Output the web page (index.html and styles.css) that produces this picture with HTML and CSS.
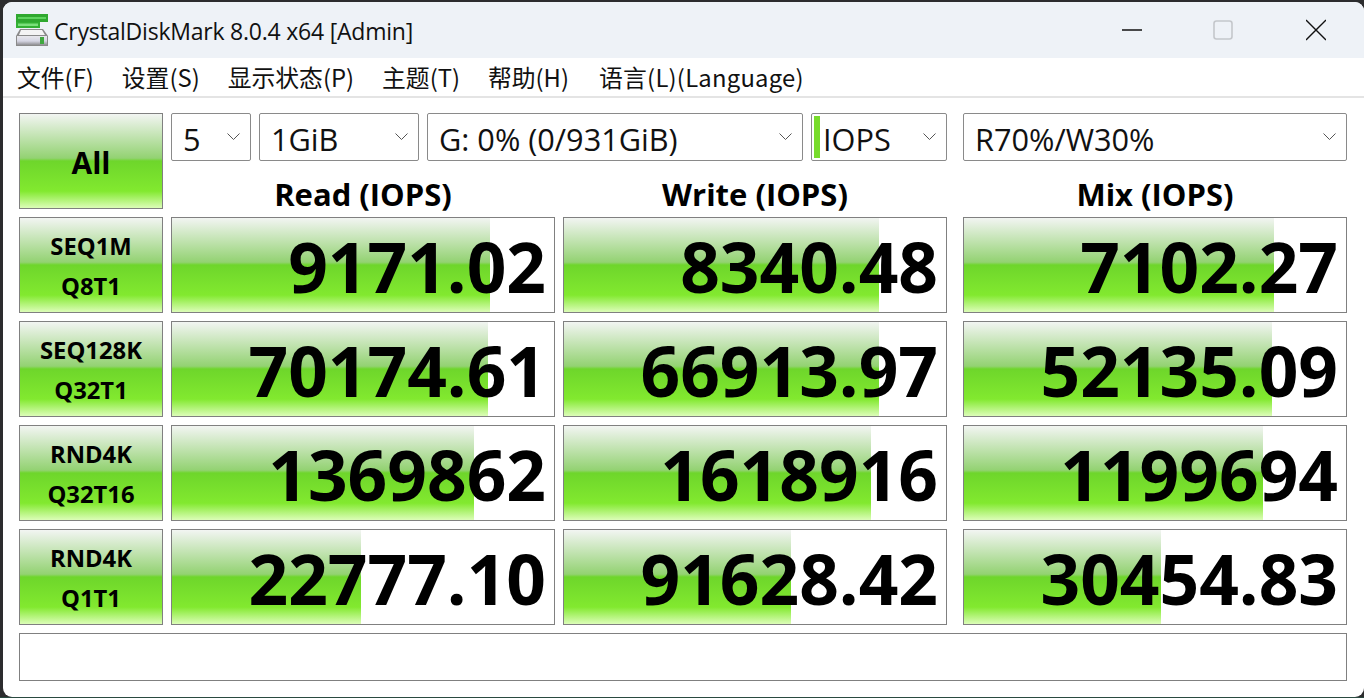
FILE: index.html
```html
<!DOCTYPE html>
<html lang="zh">
<head>
<meta charset="utf-8">
<title>CrystalDiskMark 8.0.4 x64 [Admin]</title>
<link rel="stylesheet" href="styles.css">
</head>
<body>
<div class="window">
  <header class="titlebar">
    <svg class="app-icon" viewBox="0 0 32 32" width="32" height="32" aria-hidden="true">
      <defs>
        <linearGradient id="drive" x1="0" y1="0" x2="0" y2="1"><stop offset="0" stop-color="#e8e8ec"/><stop offset="0.55" stop-color="#d6d6e4"/><stop offset="1" stop-color="#8f8f92"/></linearGradient>
      </defs>
      <rect x="0" y="0" width="32" height="8" fill="#2fa82f"/>
      <rect x="2" y="3" width="28" height="2" fill="#5fd45f"/>
      <rect x="0" y="8" width="24" height="6" fill="#33b033"/>
      <rect x="2" y="9.5" width="20" height="2.5" fill="#7be07b"/>
      <path d="M4 15H27L32 22V32H0V22Z" fill="#8a8a8a"/>
      <path d="M5 16H26L29 21H3Z" fill="#f4f4f4"/>
      <rect x="1" y="22" width="30" height="9" fill="url(#drive)"/>
      <rect x="24" y="23" width="4" height="7" fill="#3fa83f"/>
    </svg>
    <span class="title">CrystalDiskMark 8.0.4 x64 [Admin]</span>
    <div class="controls">
      <svg class="ctl" width="20" height="22" viewBox="0 0 20 22" aria-hidden="true"><path d="M0 11H20" stroke="#111" stroke-width="1.4" fill="none"/></svg>
      <svg class="ctl ctl-max" width="20" height="22" viewBox="0 0 20 22" aria-hidden="true"><rect x="1" y="2" width="18" height="18" rx="2.5" stroke="#c4c7cb" stroke-width="1.6" fill="none"/></svg>
      <svg class="ctl ctl-close" width="20" height="22" viewBox="0 0 20 22" aria-hidden="true"><path d="M0 1L20 21M20 1L0 21" stroke="#111" stroke-width="1.4" fill="none"/></svg>
    </div>
  </header>
  <nav class="menubar">
    <span class="menu-item">文件(F)</span>
    <span class="menu-item">设置(S)</span>
    <span class="menu-item">显示状态(P)</span>
    <span class="menu-item">主题(T)</span>
    <span class="menu-item">帮助(H)</span>
    <span class="menu-item menu-lang">语言(L)(Language)</span>
  </nav>
  <main class="panel">
    <div class="btn btn-all">All</div>
    <div class="combos">
      <div class="combo w-count"><span>5</span><svg class="chev" width="13" height="7" viewBox="0 0 13 7" aria-hidden="true"><path d="M.5.5L6.5 6.5L12.5.5" fill="none" stroke="#555" stroke-width="1"/></svg></div>
      <div class="combo w-size"><span>1GiB</span><svg class="chev" width="13" height="7" viewBox="0 0 13 7" aria-hidden="true"><path d="M.5.5L6.5 6.5L12.5.5" fill="none" stroke="#555" stroke-width="1"/></svg></div>
      <div class="combo w-drive"><span>G: 0% (0/931GiB)</span><svg class="chev" width="13" height="7" viewBox="0 0 13 7" aria-hidden="true"><path d="M.5.5L6.5 6.5L12.5.5" fill="none" stroke="#555" stroke-width="1"/></svg></div>
      <div class="combo w-unit"><i class="unit-mark"></i><span>IOPS</span><svg class="chev" width="13" height="7" viewBox="0 0 13 7" aria-hidden="true"><path d="M.5.5L6.5 6.5L12.5.5" fill="none" stroke="#555" stroke-width="1"/></svg></div>
      <div class="combo w-mix"><span>R70%/W30%</span><svg class="chev" width="13" height="7" viewBox="0 0 13 7" aria-hidden="true"><path d="M.5.5L6.5 6.5L12.5.5" fill="none" stroke="#555" stroke-width="1"/></svg></div>
    </div>
    <div class="head c-read">Read (IOPS)</div>
    <div class="head c-write">Write (IOPS)</div>
    <div class="head c-mix">Mix (IOPS)</div>

    <div class="btn btn-test c-label"><span>SEQ1M</span><span>Q8T1</span></div>
    <div class="cell c-read"><div class="bar" style="width:318px"></div><span class="val">9171.02</span></div>
    <div class="cell c-write"><div class="bar" style="width:315px"></div><span class="val">8340.48</span></div>
    <div class="cell c-mix"><div class="bar" style="width:310px"></div><span class="val">7102.27</span></div>

    <div class="btn btn-test c-label"><span>SEQ128K</span><span>Q32T1</span></div>
    <div class="cell c-read"><div class="bar" style="width:316px"></div><span class="val">70174.61</span></div>
    <div class="cell c-write"><div class="bar" style="width:315px"></div><span class="val">66913.97</span></div>
    <div class="cell c-mix"><div class="bar" style="width:308px"></div><span class="val">52135.09</span></div>

    <div class="btn btn-test c-label"><span>RND4K</span><span>Q32T16</span></div>
    <div class="cell c-read"><div class="bar" style="width:302px"></div><span class="val">1369862</span></div>
    <div class="cell c-write"><div class="bar" style="width:307px"></div><span class="val">1618916</span></div>
    <div class="cell c-mix"><div class="bar" style="width:299px"></div><span class="val">1199694</span></div>

    <div class="btn btn-test c-label"><span>RND4K</span><span>Q1T1</span></div>
    <div class="cell c-read"><div class="bar" style="width:189px"></div><span class="val">22777.10</span></div>
    <div class="cell c-write"><div class="bar" style="width:227px"></div><span class="val">91628.42</span></div>
    <div class="cell c-mix"><div class="bar" style="width:197px"></div><span class="val">30454.83</span></div>

    <div class="status"></div>
  </main>
</div>
</body>
</html>
```
FILE: styles.css
```css
* { box-sizing: border-box; }
html, body { margin: 0; height: 100%; overflow: hidden; }
body {
  background: linear-gradient(#2c2c2e, #2c2c2e) top / 100% 697px no-repeat, #2a4a40;
  padding: 2px 0 1px 3px;
  font-family: "Open Sans", "Noto Sans CJK SC", sans-serif;
  color: #000;
}
.window {
  height: 695px;
  background: #fff;
  border-radius: 9px;
  overflow: hidden;
  display: flex;
  flex-direction: column;
}
.titlebar {
  height: 56px;
  flex: none;
  background: #eef2f7;
  display: flex;
  align-items: center;
  padding-left: 13px;
}
.app-icon { flex: none; margin-right: 6px; margin-top: -1px; }
.title { font-size: 23px; letter-spacing: -0.22px; white-space: nowrap; color: #111; margin-top: 2px; }
.controls { margin-left: auto; display: flex; align-items: center; }
.ctl { display: block; }
.ctl-max { margin-left: 71px; }
.ctl-close { margin-left: 73px; margin-right: 38px; }
.menubar {
  height: 40px;
  flex: none;
  background: #fff;
  border-bottom: 2px solid #e4e4e4;
  display: flex;
  align-items: center;
  padding: 0 0 2px 14px;
  gap: 28px;
  font-size: 23.8px;
  font-family: "Noto Sans CJK SC", "Open Sans", sans-serif;
  color: #111;
}
.menu-item { white-space: nowrap; }
.menu-lang { margin-left: 2px; letter-spacing: 0.25px; }
.panel {
  padding: 15px 0 0 16px;
  display: grid;
  grid-template-columns: 144px 384px 384px 0 384px;
  grid-template-rows: 48px 40px repeat(4, 96px) 48px;
  gap: 8px;
}
.btn {
  border: 1px solid #808080;
  background: linear-gradient(to bottom, #f2f5f2 0%, #93d272 47%, #6ed62b 50%, #82e92f 82%, #dcfdb8 100%);
  display: flex;
  align-items: center;
  justify-content: center;
  font-weight: 700;
}
.btn-all { grid-column: 1; grid-row: 1 / span 2; font-size: 30px; padding-top: 2px; }
.combos { grid-column: 2 / span 4; grid-row: 1; display: flex; gap: 8px; }
.combo {
  height: 48px;
  border: 1px solid #8a8a8a;
  border-radius: 2px;
  background: #fff;
  display: flex;
  align-items: center;
  padding: 0 10px 0 11px;
  font-size: 30.7px;
  color: #111;
  white-space: nowrap;
  position: relative;
}
.combo span { margin-top: 4px; }
.chev { margin-left: auto; margin-top: -1px; flex: none; }
.w-count { width: 80px; }
.w-size { width: 160px; }
.w-drive { width: 376px; }
.w-unit { width: 136px; }
.w-mix { width: 384px; margin-left: 8px; }
.unit-mark {
  position: absolute;
  left: 2px;
  top: 2px;
  bottom: 2px;
  width: 6px;
  background: #78dc2c;
}
.head {
  grid-row: 2;
  font-weight: 700;
  font-size: 31px;
  text-align: center;
  line-height: 50px;
  white-space: nowrap;
}
.c-label { grid-column: 1; }
.c-read { grid-column: 2; }
.c-write { grid-column: 3; }
.c-mix { grid-column: 5; }
.btn-test {
  flex-direction: column;
  font-size: 23.8px;
  gap: 8px;
  line-height: 32px;
  padding-top: 2px;
}
.cell {
  position: relative;
  border: 1px solid #808080;
  background: #fff;
  display: flex;
  align-items: center;
  justify-content: flex-end;
  padding: 3px 8px 0 0;
}
.bar {
  position: absolute;
  left: 0;
  top: 0;
  bottom: 0;
  background: linear-gradient(to bottom, #f2f5f2 0%, #93d272 47%, #6ed62b 50%, #82e92f 82%, #dcfdb8 100%);
}
.val {
  position: relative;
  font-size: 69.4px;
  font-weight: 700;
  line-height: 1;
  white-space: nowrap;
}
.status {
  grid-column: 1 / span 5;
  grid-row: 7;
  border: 1px solid #808080;
  background: #fff;
}
```
